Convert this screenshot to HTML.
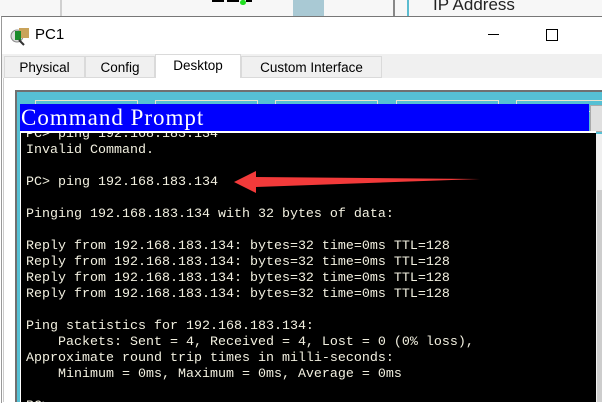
<!DOCTYPE html>
<html><head><style>
body{margin:0;width:602px;height:402px;overflow:hidden;background:#fff;position:relative;font-family:"Liberation Sans",sans-serif}
.a{position:absolute}
pre{margin:0;font-family:"Liberation Mono",monospace;font-size:13.33px;line-height:16px;color:#f2f0e0}
.t{position:absolute;border:1px solid #dadada;background:#f0f0f0;font-size:13.5px;text-align:center;line-height:22px;box-sizing:border-box}
</style></head><body>
<div class="a" style="left:0;top:0;width:602px;height:16px;background:#f7f7f7"></div>
<div class="a" style="left:60px;top:0;width:2px;height:16px;background:#d0d0d0"></div>
<div class="a" style="left:212px;top:0;width:12px;height:2px;background:#000"></div>
<div class="a" style="left:227px;top:0;width:12px;height:2px;background:#000"></div>
<div class="a" style="left:240px;top:0;width:6px;height:5px;background:#22e022;border-radius:3px"></div>
<div class="a" style="left:246px;top:0;width:6px;height:2px;background:#000"></div>
<div class="a" style="left:293px;top:0;width:31px;height:16px;background:#a9c9d4"></div>
<div class="a" style="left:393px;top:0;width:2px;height:16px;background:#888"></div>
<div class="a" style="left:407px;top:0;width:2px;height:16px;background:#5bbcd0"></div>
<div class="a" style="left:433px;top:-5px;font-size:17px;color:#222">IP Address</div>
<div class="a" style="left:1px;top:16px;width:601px;height:386px;background:#fff;border-top:1px solid #777;border-left:1px solid #999"></div>
<svg class="a" style="left:9px;top:25px" width="22" height="22" viewBox="0 0 22 22"><circle cx="8" cy="11" r="6" fill="#ddd" stroke="#888"/><rect x="10" y="3" width="10" height="10" fill="#c9a35a"/><rect x="6" y="6" width="6" height="9" fill="#1a8a2a"/><line x1="10" y1="15" x2="15" y2="20" stroke="#333" stroke-width="2"/></svg>
<div class="a" style="left:35px;top:26px;font-size:15px;color:#000">PC1</div>
<div class="a" style="left:488px;top:34px;width:11px;height:1px;background:#000"></div>
<div class="a" style="left:546px;top:29px;width:10px;height:10px;border:1px solid #000"></div>
<div class="a" style="left:2px;top:54px;width:600px;height:24px;background:#f0f0f0"></div>
<div class="t" style="left:4px;top:56px;width:81px;height:22px">Physical</div>
<div class="t" style="left:85px;top:56px;width:70px;height:22px">Config</div>
<div class="t" style="left:155px;top:54px;width:86px;height:25px;border-bottom:none;background:#fff">Desktop</div>
<div class="t" style="left:241px;top:56px;width:141px;height:22px">Custom Interface</div>
<div class="a" style="left:3px;top:78px;width:599px;height:324px;background:#fff;border-left:1px solid #ccc"></div>
<div class="a" style="left:15px;top:90px;width:587px;height:312px;background:#56c0d4;border-top:2px solid #707070;border-left:2px solid #707070;box-sizing:border-box"></div>
<div class="a" style="left:35px;top:100px;width:101px;height:10px;border:1px solid #e8e4d0"></div>
<div class="a" style="left:155px;top:100px;width:101px;height:10px;border:1px solid #e8e4d0"></div>
<div class="a" style="left:275px;top:100px;width:101px;height:10px;border:1px solid #e8e4d0"></div>
<div class="a" style="left:396px;top:100px;width:101px;height:10px;border:1px solid #e8e4d0"></div>
<div class="a" style="left:516px;top:100px;width:101px;height:10px;border:1px solid #e8e4d0"></div>
<div class="a" style="left:20px;top:104px;width:569px;height:27px;background:#0000ff"></div>
<div class="a" style="left:21px;top:104px;font-family:'Liberation Serif',serif;font-size:23px;letter-spacing:1px;color:#fff;line-height:28px">Command Prompt</div>
<div class="a" style="left:590px;top:105px;width:12px;height:25px;background:#e0e0e0;border:1px solid #aaa"></div>
<div class="a" style="left:20px;top:131px;width:576px;height:271px;background:#fff"></div>
<div class="a" style="left:21px;top:133px;width:575px;height:269px;background:#000;overflow:hidden">
<pre style="position:absolute;left:5px;top:-6px">PC> ping 192.168.183.134
Invalid Command.

PC> ping 192.168.183.134

Pinging 192.168.183.134 with 32 bytes of data:

Reply from 192.168.183.134: bytes=32 time=0ms TTL=128
Reply from 192.168.183.134: bytes=32 time=0ms TTL=128
Reply from 192.168.183.134: bytes=32 time=0ms TTL=128
Reply from 192.168.183.134: bytes=32 time=0ms TTL=128

Ping statistics for 192.168.183.134:
    Packets: Sent = 4, Received = 4, Lost = 0 (0% loss),
Approximate round trip times in milli-seconds:
    Minimum = 0ms, Maximum = 0ms, Average = 0ms

PC> </pre></div>
<div class="a" style="left:596px;top:134px;width:6px;height:268px;background:#f0f0f0"></div>
<div class="a" style="left:597px;top:190px;width:5px;height:212px;background:#cdcdcd"></div>
<svg class="a" style="left:0;top:0" width="602" height="402"><polygon points="234,182 256,171 256,177 480,179 256,187 256,193" fill="#f23a3a"/></svg>
</body></html>
